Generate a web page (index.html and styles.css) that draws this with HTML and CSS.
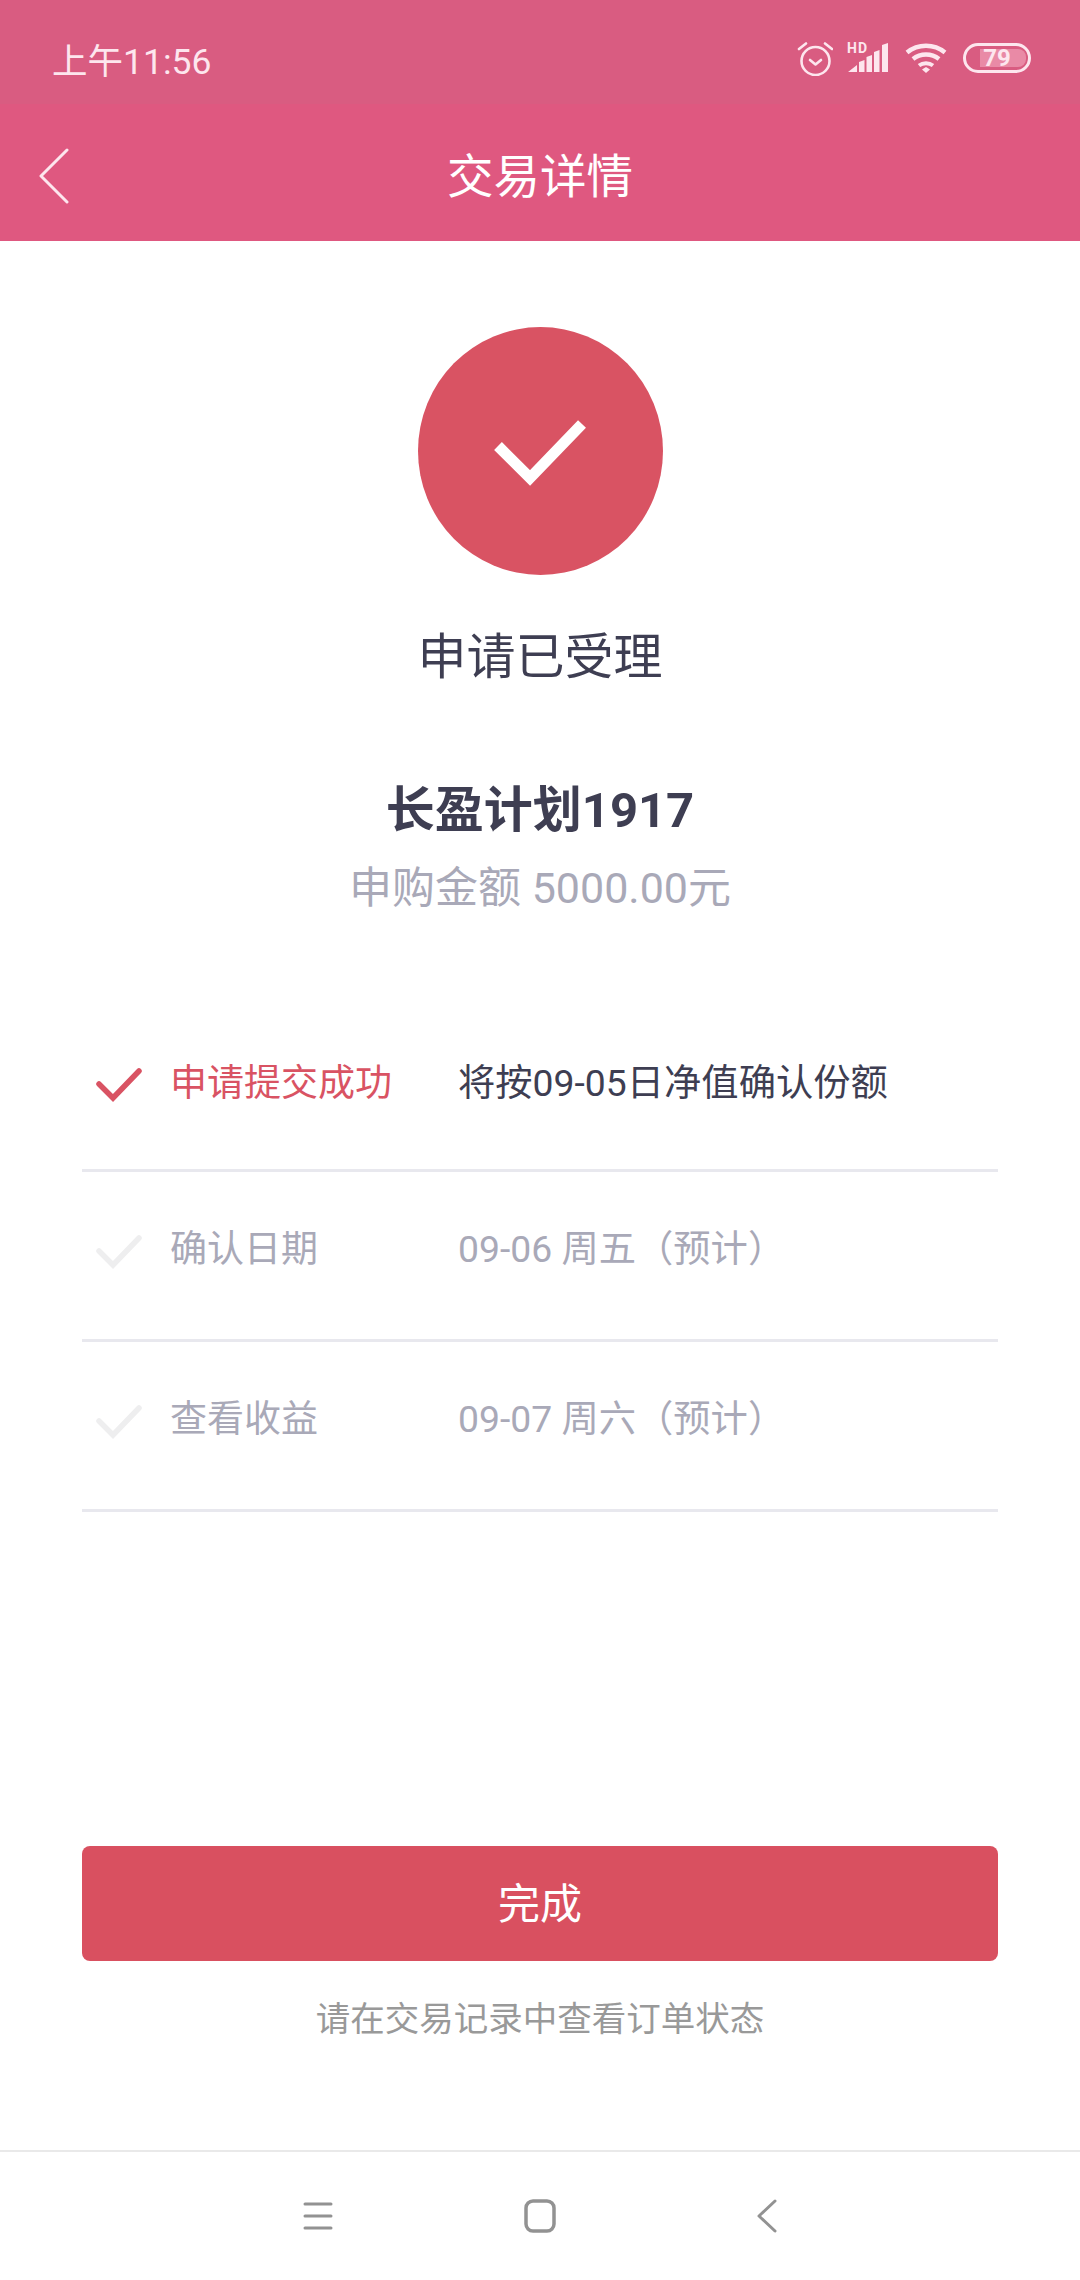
FILE: index.html
```html
<!DOCTYPE html>
<html lang="zh-CN">
<head>
    <meta charset="UTF-8">
    <meta name="viewport" content="width=device-width, initial-scale=1.0">
    <title>交易详情</title>
    <link rel="stylesheet" href="styles.css">
</head>
<body>
    <div class="phone">
        <div class="status-bar">
            <span class="status-time">上午11:56</span>
            <div class="status-icons">
                <svg class="icon-alarm" width="36" height="36" viewBox="0 0 36 36" fill="none" stroke="#fde6ee" stroke-width="2.600" stroke-linecap="round" stroke-linejoin="round">
                    <circle cx="18.500" cy="21" r="14"/>
                    <path d="M13 20l5.500 4.500 5.500-4.500"/>
                    <path d="M2 9l7-5.500M35 9l-7-5.500"/>
                </svg>
                <div class="signal">
                    <span class="signal-hd">HD</span>
                    <svg width="42" height="30" viewBox="0 0 42 30" fill="#fde6ee">
                        <path d="M1 29l9-7v7zM12 29V19l5.500-2v12zM19.500 29V14l5.500-2v17zM27 29V9l5.500-2v22zM35 29V2l6-2v29z"/>
                    </svg>
                </div>
                <svg class="icon-wifi" width="42" height="30" viewBox="0 0 42 30" fill="none" stroke="#fde6ee" stroke-width="4.500">
                    <path d="M2 9.500c11-9 27-9 38 0"/>
                    <path d="M8 16c7.500-6 18.500-6 26 0"/>
                    <path d="M14 22.500c4-3 10-3 14 0" stroke-width="4"/>
                    <path d="M17 26.500l4-2.500 4 2.500-4 3.500z" fill="#fde6ee" stroke="none"/>
                </svg>
                <div class="battery">
                    <div class="battery-fill"></div>
                    <span class="battery-num">79</span>
                </div>
            </div>
        </div>
        <div class="nav-bar">
            <svg class="nav-back" width="32" height="56" viewBox="0 0 32 56" fill="none" stroke="#fde6ee" stroke-width="3" stroke-linecap="round" stroke-linejoin="round">
                <path d="M28 2L2 28l26 26"/>
            </svg>
            <span class="nav-title">交易详情</span>
        </div>

        <div class="content">
            <div class="result-circle">
                <svg width="92" height="70" viewBox="0 0 92 70" fill="none" stroke="#fff" stroke-width="11">
                    <path d="M4 30l32 32L88 8"/>
                </svg>
            </div>
            <div class="result-title">申请已受理</div>
            <div class="plan-name">长盈计划1917</div>
            <div class="plan-amount">申购金额 5000.00元</div>

            <div class="steps">
                <div class="step">
                    <svg class="step-check" width="46" height="36" viewBox="0 0 46 36" fill="none" stroke="#d95363" stroke-width="5.500" stroke-linecap="round">
                        <path d="M3 17l14 14L43 4"/>
                    </svg>
                    <span class="step-label step-label-active">申请提交成功</span>
                    <span class="step-value step-value-active">将按09-05日净值确认份额</span>
                </div>
                <div class="step">
                    <svg class="step-check" width="46" height="36" viewBox="0 0 46 36" fill="none" stroke="#eeeeef" stroke-width="5.500" stroke-linecap="round">
                        <path d="M3 17l14 14L43 4"/>
                    </svg>
                    <span class="step-label">确认日期</span>
                    <span class="step-value">09-06 周五（预计）</span>
                </div>
                <div class="step">
                    <svg class="step-check" width="46" height="36" viewBox="0 0 46 36" fill="none" stroke="#eeeeef" stroke-width="5.500" stroke-linecap="round">
                        <path d="M3 17l14 14L43 4"/>
                    </svg>
                    <span class="step-label">查看收益</span>
                    <span class="step-value">09-07 周六（预计）</span>
                </div>
            </div>

            <button class="done-button">完成</button>
            <div class="done-hint">请在交易记录中查看订单状态</div>
        </div>

        <div class="sys-nav">
            <svg width="32" height="32" viewBox="0 0 32 32" fill="none" stroke="#929292" stroke-width="3" stroke-linecap="round">
                <path d="M3 4h26M3 16h26M3 28h26"/>
            </svg>
            <svg width="32" height="34" viewBox="0 0 32 34" fill="none" stroke="#929292" stroke-width="3.500">
                <rect x="2" y="2" width="28" height="30" rx="7"/>
            </svg>
            <svg class="sys-back" width="20" height="34" viewBox="0 0 20 34" fill="none" stroke="#929292" stroke-width="3" stroke-linecap="round" stroke-linejoin="round">
                <path d="M18 2L2 17l16 15"/>
            </svg>
        </div>
    </div>
</body>
</html>
```

FILE: styles.css
```css
* {
    box-sizing: border-box;
}
body {
    margin: 0;
    background-color: #fff;
    font-family: Roboto, "Noto Sans CJK SC", sans-serif;
}
.phone {
    width: 1080px;
    height: 2280px;
    display: flex;
    flex-direction: column;
}
.status-bar {
    height: 104px;
    padding: 12px 49px 0 52px;
    display: flex;
    align-items: center;
    justify-content: space-between;
    background-color: #d95c81;
}
.status-time {
    font-size: 35.500px;
    color: #fde6ee;
}
.status-icons {
    display: flex;
    align-items: center;
}
.icon-alarm {
    margin-right: 14px;
}
.signal {
    position: relative;
    width: 42px;
    height: 30px;
    margin-right: 16px;
}
.signal svg {
    display: block;
}
.signal-hd {
    position: absolute;
    top: 0;
    left: 0;
    font-size: 14px;
    font-weight: 700;
    line-height: 11px;
    letter-spacing: 1px;
    color: #fde6ee;
}
.icon-wifi {
    margin-right: 16px;
}
.battery {
    position: relative;
    width: 68px;
    height: 30px;
    border: 3px solid #fde6ee;
    border-radius: 15px;
    display: flex;
    align-items: center;
    justify-content: center;
}
.battery-fill {
    position: absolute;
    left: 14px;
    top: 3px;
    width: 46px;
    height: 18px;
    border-radius: 0 8px 8px 0;
    background-color: #e98aa6;
}
.battery-num {
    position: relative;
    font-size: 24px;
    font-weight: 700;
    color: #fde6ee;
}
.nav-bar {
    position: relative;
    height: 137px;
    display: flex;
    align-items: center;
    justify-content: center;
    background-color: #df5880;
}
.nav-back {
    position: absolute;
    left: 39px;
    top: 44px;
}
.nav-title {
    font-size: 46.500px;
    color: #fff;
}
.content {
    flex: 1;
    padding: 86px 82px 0;
    display: flex;
    flex-direction: column;
    align-items: center;
}
.result-circle {
    width: 245px;
    height: 248px;
    border-radius: 50%;
    display: flex;
    align-items: center;
    justify-content: center;
    background-color: #d95363;
}
.result-title {
    margin-top: 50px;
    font-size: 49px;
    line-height: 66px;
    color: #3e3e52;
}
.plan-name {
    margin-top: 88px;
    font-size: 49px;
    line-height: 64px;
    font-weight: 700;
    color: #3e3e52;
}
.plan-amount {
    margin-top: 17px;
    font-size: 43px;
    line-height: 56px;
    color: #a9a9b8;
}
.steps {
    width: 100%;
    margin-top: 86px;
}
.step {
    height: 170px;
    display: flex;
    align-items: center;
    padding: 0 0 20px 14px;
    border-bottom: 3px solid #e8e8ee;
}
.step:first-child {
    padding-bottom: 12px;
}
.step-check {
    flex: none;
    margin-top: 12px;
    margin-right: 28px;
}
.step:first-child .step-check {
    margin-top: 10px;
}
.step-label {
    width: 288px;
    flex: none;
    font-size: 37px;
    color: #a9a9b8;
}
.step-label-active {
    color: #d95363;
}
.step-value {
    font-size: 37.300px;
    color: #a9a9b8;
}
.step-value-active {
    color: #3e3e52;
}
.done-button {
    width: 100%;
    height: 115px;
    margin-top: 334px;
    padding: 0 0 6px;
    border: none;
    border-radius: 8px;
    font-family: inherit;
    font-size: 42px;
    color: #fff;
    background-color: #d95060;
}
.done-hint {
    margin-top: 37px;
    font-size: 34.500px;
    line-height: 42px;
    color: #999;
}
.sys-nav {
    height: 130px;
    padding-left: 302px;
    display: flex;
    align-items: center;
    gap: 190px;
    border-top: 2px solid #e9e9e9;
}
.sys-back {
    margin-left: 11px;
}
```
